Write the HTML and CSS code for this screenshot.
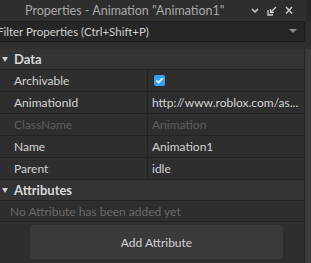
FILE: index.html
```html
<!DOCTYPE html>
<html lang="en">
<head>
<meta charset="UTF-8" />
<title>Properties</title>
<link rel="stylesheet" href="styles.css">
</head>
<body>

<div class="titlebar">
  <span class="title">Properties - Animation "Animation1"</span>
  <div class="win-icons">
    <svg width="8" height="9" viewBox="0 0 8 9"><path d="M1 3 L4 6 L7 3" stroke="#cfcfcf" stroke-width="1.5" fill="none"/></svg>
    <svg width="10" height="10" viewBox="0 0 10 10"><path d="M1 4 V9 H6" stroke="#cfcfcf" stroke-width="1.3" fill="none"/><path d="M3.5 3 V6.5 H7" stroke="#cfcfcf" stroke-width="1.3" fill="none"/><path d="M4 6 L9 1" stroke="#cfcfcf" stroke-width="1.3"/></svg>
    <svg width="8" height="9" viewBox="0 0 8 9"><path d="M1 1 L7 7.5 M7 1 L1 7.5" stroke="#cfcfcf" stroke-width="1.4"/></svg>
  </div>
</div>

<div class="filter">
  <span class="filter-text">Filter Properties (Ctrl+Shift+P)</span>
  <svg class="filter-arrow" width="8" height="5" viewBox="0 0 8 5"><path d="M0 0 H8 L4 4 Z" fill="#8a8a8a"/></svg>
</div>

<div class="panel">
  <div class="props">
    <div class="section"><span class="caret"></span>Data</div>
    <div class="row"><div class="key">Archivable</div><div class="val"><span class="check"><svg width="9" height="7" viewBox="0 0 10 8"><path d="M1.5 4 L4 6.3 L8.5 1.5" stroke="#fff" stroke-width="1.9" fill="none"/></svg></span></div></div>
    <div class="row"><div class="key">AnimationId</div><div class="val">http://www.roblox.com/as...</div></div>
    <div class="row dim"><div class="key">ClassName</div><div class="val">Animation</div></div>
    <div class="row"><div class="key">Name</div><div class="val">Animation1</div></div>
    <div class="row"><div class="key">Parent</div><div class="val">idle</div></div>
    <div class="section"><span class="caret"></span>Attributes</div>
    <div class="empty">No Attribute has been added yet</div>
    <div class="btn-wrap"><button class="add">Add Attribute</button></div>
  </div>
  <div class="scrollbar"></div>
</div>

</body>
</html>
```

FILE: styles.css
```css
body {
  margin: 0;
  width: 311px;
  height: 263px;
  overflow: hidden;
  background: #2e2e2e;
  font-family: Lato, sans-serif;
  font-size: 12px;
  color: #d4d4d4;
}
.titlebar {
  height: 21px;
  display: flex;
  align-items: center;
  background: #2e2e2e;
  border-right: 5px solid #272727;
}
.title {
  margin-left: 25px;
  font-size: 12.5px;
  color: #a9a9a9;
}
.win-icons {
  margin-left: auto;
  margin-right: 13px;
  display: flex;
  align-items: center;
  gap: 8px;
}
.filter {
  height: 19px;
  margin: 0 6px 0 -4px;
  display: flex;
  align-items: center;
  background: #262626;
  border: 1px solid #1c1c1c;
}
.filter-text {
  color: #d0d0d0;
  font-size: 11.5px;
}
.filter-arrow {
  margin-left: auto;
  margin-right: 7px;
}
.panel {
  display: flex;
  margin-top: 7px;
}
.props {
  flex: 1;
}
.scrollbar {
  width: 6px;
  background: #3a3a3a;
  border-left: 1px solid #222;
  height: 220px;
}
.section {
  height: 20px;
  display: flex;
  align-items: center;
  font-weight: bold;
  font-size: 13px;
  color: #d8d8d8;
  background: #333333;
  border-bottom: 1px solid #222;
}
.caret {
  width: 0;
  height: 0;
  margin: 0 6px 0 2px;
  border-left: 3px solid transparent;
  border-right: 3px solid transparent;
  border-top: 5px solid #cfcfcf;
}
.row {
  height: 21px;
  display: flex;
  border-bottom: 1px solid #222;
}
.key {
  width: 133px;
  padding-left: 14px;
  display: flex;
  align-items: center;
  border-right: 1px solid #222;
}
.val {
  flex: 1;
  padding-left: 4px;
  display: flex;
  align-items: center;
  overflow: hidden;
  white-space: nowrap;
}
.dim .key, .dim .val {
  color: #5e5e5e;
}
.check {
  width: 11px;
  height: 11px;
  margin-left: 2px;
  border-radius: 2px;
  background: #35a2f5;
  display: flex;
  align-items: center;
  justify-content: center;
}
.empty {
  height: 20px;
  padding-left: 10px;
  display: flex;
  align-items: center;
  color: #6a6a6a;
  border-bottom: 1px solid #222;
}
.btn-wrap {
  padding: 3px 21px 0 30px;
}
.add {
  width: 100%;
  height: 34px;
  border: none;
  border-radius: 4px;
  background: #3a3a3a;
  color: #d4d4d4;
  font-family: Lato, sans-serif;
  font-size: 12px;
}
```
